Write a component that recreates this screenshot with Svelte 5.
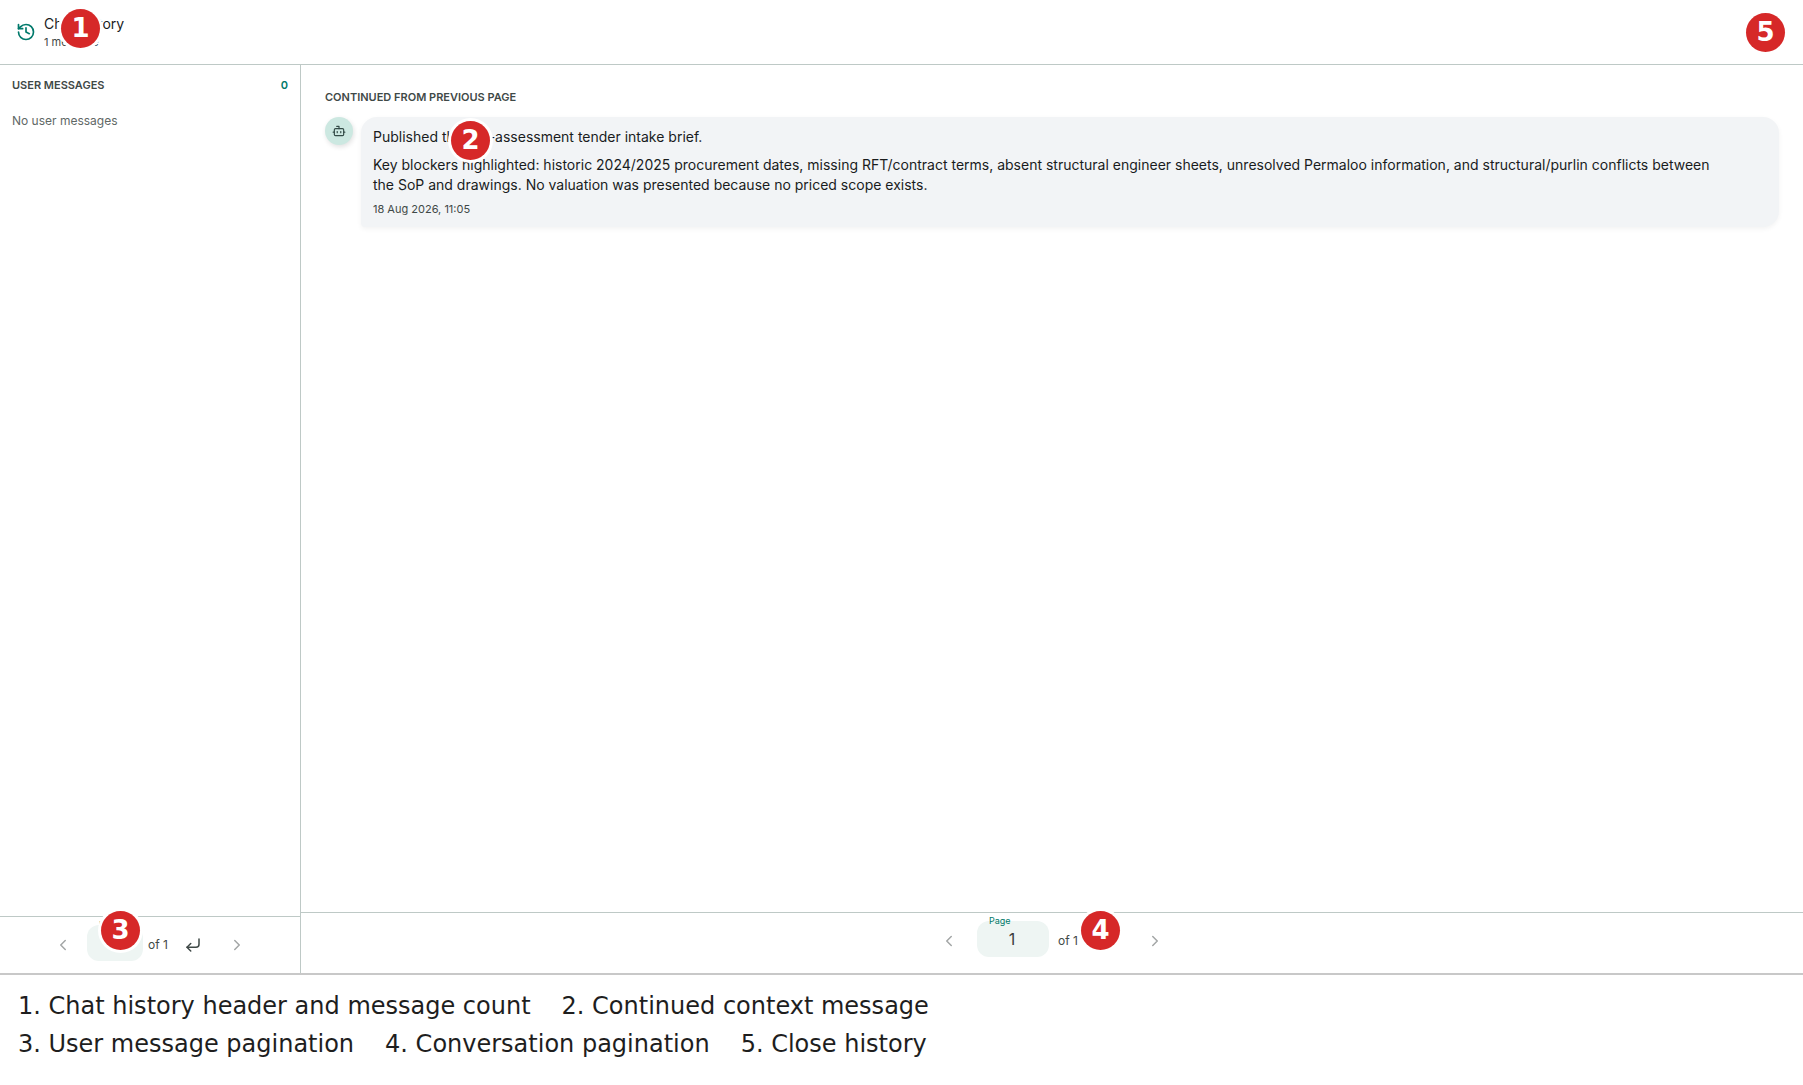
<script>
    let userPage = 1;
    let chatPage = 1;

    const message = {
        paragraphs: [
            'Published the pre-assessment tender intake brief.',
            'Key blockers highlighted: historic 2024/2025 procurement dates, missing RFT/contract terms, absent structural engineer sheets, unresolved Permaloo information, and structural/purlin conflicts between\nthe SoP and drawings. No valuation was presented because no priced scope exists.'
        ],
        time: '18 Aug 2026, 11:05'
    };

    const legend = [
        ['1. Chat history header and message count', '2. Continued context message'],
        ['3. User message pagination', '4. Conversation pagination', '5. Close history']
    ];
</script>

{#snippet icon(paths, size)}
    <svg width={size} height={size} viewBox="0 0 24 24" fill="none" stroke="currentColor"
         stroke-width="2" stroke-linecap="round" stroke-linejoin="round" aria-hidden="true">
        {#each paths as d}
            <path {d} />
        {/each}
    </svg>
{/snippet}

<div class="page">
    <div class="dialog">
        <header class="header">
            <span class="header-icon">
                {@render icon(['M3 12a9 9 0 1 0 9-9 9.75 9.75 0 0 0-6.74 2.74L3 8', 'M3 3v5h5', 'M12 7v5l4 2'], 20)}
            </span>
            <div class="header-text">
                <h1>Chat history</h1>
                <p>1 message</p>
            </div>
            <button type="button" class="icon-button close" aria-label="Close history">
                {@render icon(['M18 6 6 18', 'm6 6 12 12'], 18)}
                <span class="badge">5</span>
            </button>
            <span class="badge badge-header">1</span>
        </header>

        <div class="body">
            <aside class="sidebar">
                <div class="sidebar-title">
                    <h2>USER MESSAGES</h2>
                    <span class="count">0</span>
                </div>
                <p class="empty">No user messages</p>
                <nav class="pager pager-user" aria-label="User message pages">
                    <button type="button" class="icon-button" aria-label="Previous page" disabled>
                        {@render icon(['m15 18-6-6 6-6'], 18)}
                    </button>
                    <div class="field">
                        <label for="user-page">Page</label>
                        <input id="user-page" type="text" inputmode="numeric" bind:value={userPage}>
                    </div>
                    <span class="total">of 1</span>
                    <button type="button" class="icon-button" aria-label="Go to page">
                        {@render icon(['M20 4v7a4 4 0 0 1-4 4H4', 'm9 10-5 5 5 5'], 18)}
                    </button>
                    <button type="button" class="icon-button" aria-label="Next page" disabled>
                        {@render icon(['m9 18 6-6-6-6'], 18)}
                    </button>
                    <span class="badge badge-user">3</span>
                </nav>
            </aside>

            <main class="conversation">
                <section class="messages">
                    <h2>CONTINUED FROM PREVIOUS PAGE</h2>
                    <article class="message">
                        <span class="avatar">
                            {@render icon(['M12 8V4H8', 'M6 8h12a2 2 0 0 1 2 2v8a2 2 0 0 1-2 2H6a2 2 0 0 1-2-2v-8a2 2 0 0 1 2-2z', 'M2 14h2', 'M20 14h2', 'M15 13v2', 'M9 13v2'], 14)}
                        </span>
                        <div class="bubble">
                            {#each message.paragraphs as text}
                                <p>{text}</p>
                            {/each}
                            <time datetime="2026-08-18T11:05">{message.time}</time>
                            <span class="badge badge-message">2</span>
                        </div>
                    </article>
                </section>
                <nav class="pager pager-chat" aria-label="Conversation pages">
                    <button type="button" class="icon-button" aria-label="Previous page" disabled>
                        {@render icon(['m15 18-6-6 6-6'], 18)}
                    </button>
                    <div class="field">
                        <label for="chat-page">Page</label>
                        <input id="chat-page" type="text" inputmode="numeric" bind:value={chatPage}>
                    </div>
                    <span class="total">of 1</span>
                    <button type="button" class="icon-button go" aria-label="Go to page">
                        {@render icon(['M20 4v7a4 4 0 0 1-4 4H4', 'm9 10-5 5 5 5'], 18)}
                        <span class="badge badge-chat">4</span>
                    </button>
                    <button type="button" class="icon-button" aria-label="Next page" disabled>
                        {@render icon(['m9 18 6-6-6-6'], 18)}
                    </button>
                </nav>
            </main>
        </div>
    </div>

    <footer class="legend">
        {#each legend as row}
            <div class="legend-row">
                {#each row as item}
                    <span>{item}</span>
                {/each}
            </div>
        {/each}
    </footer>
</div>

<style>
    :global(body) {
        background: #ffffff;
    }
    .page {
        display: flex;
        flex-direction: column;
        min-height: 100vh;
        font-family: Inter, sans-serif;
        color: #191c1d;
    }
    h1, h2, p {
        margin: 0;
        font-weight: 400;
    }
    svg {
        display: block;
    }
    .dialog {
        flex: 1;
        display: flex;
        flex-direction: column;
    }

    .header {
        position: relative;
        display: flex;
        align-items: center;
        gap: 8px;
        padding: 12px 17px 12px 16px;
        border-bottom: 1px solid #bec9c6;
    }
    .header-icon {
        color: #00796b;
    }
    .header-text {
        flex: 1;
    }
    .header h1 {
        font-size: 14px;
        line-height: 20px;
    }
    .header p {
        font-size: 11px;
        line-height: 16px;
        color: #3f4947;
    }

    .icon-button {
        display: flex;
        align-items: center;
        justify-content: center;
        width: 40px;
        height: 40px;
        padding: 0;
        border: 0;
        border-radius: 20px;
        background: transparent;
        color: #3f4947;
        cursor: pointer;
    }
    .icon-button:disabled {
        color: #a3a6a6;
        cursor: default;
    }
    .close, .go {
        position: relative;
    }

    .body {
        flex: 1;
        display: flex;
    }
    .sidebar {
        display: flex;
        flex-direction: column;
        width: 300px;
        border-right: 1px solid #bec9c6;
    }
    .sidebar-title {
        display: flex;
        justify-content: space-between;
        padding: 12px 12px 8px;
        font-size: 11px;
        line-height: 16px;
    }
    h2 {
        font-size: 11px;
        line-height: 16px;
        font-weight: 600;
        color: #3f4947;
    }
    .count {
        font-weight: 600;
        color: #00796b;
    }
    .empty {
        flex: 1;
        padding: 12px;
        font-size: 12px;
        line-height: 16px;
        color: #5f6866;
    }

    .conversation {
        flex: 1;
        min-width: 0;
        display: flex;
        flex-direction: column;
    }
    .messages {
        flex: 1;
        display: flex;
        flex-direction: column;
        gap: 12px;
        padding: 24px;
    }
    .message {
        display: flex;
        gap: 8px;
    }
    .avatar {
        flex: none;
        display: flex;
        align-items: center;
        justify-content: center;
        width: 28px;
        height: 28px;
        border-radius: 14px;
        background: #cce8e1;
        color: #334b47;
        box-shadow: 1px 2px 5px rgba(0, 0, 0, 0.12);
    }
    .bubble {
        position: relative;
        flex: 1;
        padding: 10px 12px;
        border-radius: 16px 16px 16px 4px;
        background: #f2f4f6;
        box-shadow: 0 2px 5px rgba(0, 0, 0, 0.05);
    }
    .bubble p {
        font-size: 14px;
        line-height: 20px;
        white-space: pre-line;
    }
    .bubble p + p {
        margin-top: 8px;
    }
    .bubble time {
        display: block;
        margin-top: 6px;
        font-size: 11px;
        line-height: 16px;
        color: #3f4947;
    }

    .pager {
        display: flex;
        align-items: center;
        justify-content: center;
        border-top: 1px solid #bec9c6;
    }
    .pager-user {
        position: relative;
        gap: 4px;
        padding: 8px;
    }
    .pager-chat {
        gap: 8px;
        padding: 8px 8px 12px;
    }
    .field {
        position: relative;
        width: 72px;
        height: 40px;
    }
    .pager-user .field {
        width: 56px;
    }
    .field label {
        position: absolute;
        top: -6px;
        left: 12px;
        font-size: 9px;
        line-height: 12px;
        color: #00796b;
    }
    .field input {
        display: block;
        box-sizing: border-box;
        width: 100%;
        height: 36px;
        padding: 0 2px 0 0;
        border: 0;
        border-radius: 12px;
        background: #eef5f3;
        font-family: inherit;
        font-size: 16px;
        text-align: center;
        color: #3a3d3e;
    }
    .total {
        min-width: 22px;
        font-size: 12px;
        line-height: 16px;
        text-align: center;
        color: #3f4947;
    }

    /* numbered callouts */
    .badge {
        position: absolute;
        width: 39px;
        height: 39px;
        border-radius: 50%;
        background: #d62828;
        box-shadow: 0 0 0 3px #ffffff;
        color: #ffffff;
        font-family: "DejaVu Sans", sans-serif;
        font-size: 26px;
        font-weight: 700;
        line-height: 39px;
        text-align: center;
    }
    .close .badge {
        top: 1px;
        left: 0;
    }
    .badge-header {
        top: 9px;
        left: 61px;
    }
    .badge-user {
        top: -6px;
        left: 101px;
    }
    .badge-message {
        top: 4px;
        left: 90px;
    }
    .badge-chat {
        top: -10px;
        left: -6px;
    }

    .legend {
        padding: 12px 18px 22px;
        border-top: 2px solid #c8c8c8;
        font-family: "DejaVu Sans", sans-serif;
        font-size: 24px;
        line-height: 38px;
        color: #1e1e1e;
    }
    .legend-row {
        display: flex;
        flex-wrap: wrap;
        column-gap: 31px;
    }
</style>
